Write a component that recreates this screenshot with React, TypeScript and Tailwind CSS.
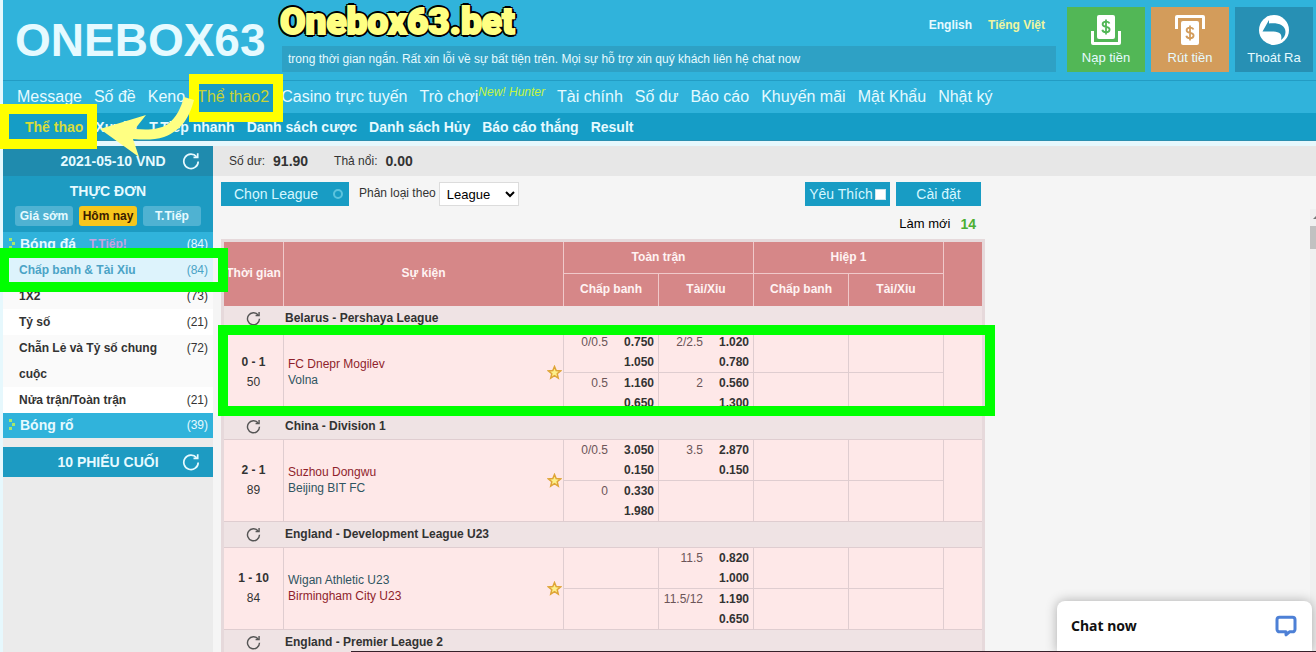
import clsx from "clsx";

type Line = { hdp?: string; odds: [string, string] };

type Match = {
  league: string;
  score: string;
  minute: string;
  home: string;
  away: string;
  favourite: "home" | "away";
  rows: [Line | null, Line | null][];
};

const mainNav = [
  "Message",
  "Số đề",
  "Keno",
  "Thể thao2",
  "Casino trực tuyến",
  "Trò chơi",
  "Tài chính",
  "Số dư",
  "Báo cáo",
  "Khuyến mãi",
  "Mật Khẩu",
  "Nhật ký",
];

const subNav = [
  "Thể thao",
  "Xuyên",
  "T.Tiếp nhanh",
  "Danh sách cược",
  "Danh sách Hủy",
  "Báo cáo thắng",
  "Result",
];

const markets = [
  { name: "Chấp banh & Tài Xỉu", count: 84 },
  { name: "1X2", count: 73 },
  { name: "Tỷ số", count: 21 },
  { name: "Chẵn Lẻ và Tỷ số chung cuộc", count: 72 },
  { name: "Nửa trận/Toàn trận", count: 21 },
];

const matches: Match[] = [
  {
    league: "Belarus - Pershaya League",
    score: "0 - 1",
    minute: "50",
    home: "FC Dnepr Mogilev",
    away: "Volna",
    favourite: "home",
    rows: [
      [
        { hdp: "0/0.5", odds: ["0.750", "1.050"] },
        { hdp: "2/2.5", odds: ["1.020", "0.780"] },
      ],
      [
        { hdp: "0.5", odds: ["1.160", "0.650"] },
        { hdp: "2", odds: ["0.560", "1.300"] },
      ],
    ],
  },
  {
    league: "China - Division 1",
    score: "2 - 1",
    minute: "89",
    home: "Suzhou Dongwu",
    away: "Beijing BIT FC",
    favourite: "home",
    rows: [
      [
        { hdp: "0/0.5", odds: ["3.050", "0.150"] },
        { hdp: "3.5", odds: ["2.870", "0.150"] },
      ],
      [{ hdp: "0", odds: ["0.330", "1.980"] }, null],
    ],
  },
  {
    league: "England - Development League U23",
    score: "1 - 10",
    minute: "84",
    home: "Wigan Athletic U23",
    away: "Birmingham City U23",
    favourite: "away",
    rows: [
      [null, { hdp: "11.5", odds: ["0.820", "1.000"] }],
      [null, { hdp: "11.5/12", odds: ["1.190", "0.650"] }],
    ],
  },
];

const RefreshIcon = ({ className }: { className?: string }) => (
  <svg viewBox="0 0 18 18" fill="none" className={className}>
    <path
      d="M14.600 4.800A7.200 7.200 0 1 0 16.200 9.400"
      stroke="currentColor"
      strokeWidth="1.7"
    />
    <path d="M11.500 5.400h4.200V1.200" stroke="currentColor" strokeWidth="1.7" />
  </svg>
);

const StarIcon = () => (
  <svg viewBox="0 0 16 16" className="size-[15px] shrink-0">
    <path
      d="M8 1.600l1.800 4.300 4.700.4-3.600 3 1.100 4.600L8 11.400l-4 2.500 1.100-4.600-3.600-3 4.700-.4z"
      fill="#fdf08a"
      stroke="#dfa437"
      strokeWidth="1.6"
    />
  </svg>
);

const DepositIcon = () => (
  <svg viewBox="0 0 30 30" className="size-[30px]">
    <rect x="6" y="0" width="18" height="24" rx="2" fill="#fff" />
    <path d="M0 16h3v11h24V16h3v12a2 2 0 0 1-2 2H2a2 2 0 0 1-2-2z" fill="#fff" />
    <path
      d="M18.400 8.500C18 7 16.600 6.600 15 6.600c-2 0-3.400 1-3.400 2.600 0 3.800 7 1.800 7 5.400 0 1.800-1.600 2.700-3.600 2.700-1.900 0-3.300-.8-3.700-2.500M15 4.500v15"
      fill="none"
      stroke="#52b756"
      strokeWidth="1.8"
    />
  </svg>
);

const WithdrawIcon = () => (
  <svg viewBox="0 0 30 30" className="size-[30px]">
    <rect x="6" y="6" width="18" height="24" rx="2" fill="#fff" />
    <path d="M0 14V2a2 2 0 0 1 2-2h26a2 2 0 0 1 2 2v12h-3V3H3v11z" fill="#fff" />
    <path
      d="M18.400 14.500C18 13 16.600 12.600 15 12.600c-2 0-3.400 1-3.400 2.600 0 3.800 7 1.800 7 5.400 0 1.800-1.600 2.700-3.600 2.700-1.900 0-3.300-.8-3.700-2.500M15 10.500v15"
      fill="none"
      stroke="#d39c5b"
      strokeWidth="1.8"
    />
  </svg>
);

const LogoutIcon = () => (
  <svg viewBox="0 0 30 30" className="size-[30px]">
    <circle cx="15" cy="15" r="15" fill="#fff" />
    <path
      d="M3.500 16.500L10 5v3.500C18 7.500 26.500 9.500 26.500 17c0 3.500-2 6.500-4.500 8 1.500-6-1-8.500-10-8.500z"
      fill="#2790b4"
    />
  </svg>
);

const ArrowMarks = () => (
  <svg viewBox="0 0 7 12" className="h-3 w-[7px] shrink-0">
    <path
      d="M0 0h3v3H0zM3 4h3v3H3zM0 8h3v3H0z"
      fill="#a6e86a"
    />
  </svg>
);

const Header = () => (
  <header className="bg-[#30b3db] text-[#e6faff]">
    <div className="flex h-[81px] border-b border-[#239cc4]">
      <h1 className="w-[279px] shrink-0 pt-[14px] pl-3 text-[46px] leading-[52px] font-bold">
        ONEBOX63
      </h1>
      <div className="flex min-w-0 flex-1 flex-col">
        <div className="flex h-[46px] justify-end gap-4 pt-4 pr-[11px] text-xs leading-[18px] font-bold">
          <a href="#en">English</a>
          <a href="#vi" className="text-[#eff5a0]">
            Tiếng Việt
          </a>
        </div>
        <p className="h-[26px] truncate bg-[#2ea1c5] px-[6px] text-xs leading-[26px] text-[#e6faff]">
          trong thời gian ngắn. Rất xin lỗi về sự bất tiện trên. Mọi sự hỗ trợ
          xin quý khách liên hệ chat now
        </p>
      </div>
      <div className="flex gap-[6px] pt-[7px] pr-[3px] pl-[11px] text-[13px] leading-4">
        <button className="flex h-[65px] w-[78px] flex-col items-center gap-[5px] bg-[#52b756] pt-2">
          <DepositIcon />
          Nạp tiền
        </button>
        <button className="flex h-[65px] w-[78px] flex-col items-center gap-[5px] bg-[#d39c5b] pt-2">
          <WithdrawIcon />
          Rút tiền
        </button>
        <button className="flex h-[65px] w-[78px] flex-col items-center gap-[5px] bg-[#2790b4] pt-2">
          <LogoutIcon />
          Thoát Ra
        </button>
      </div>
    </div>
    <nav className="flex h-8 gap-3 pl-[14px] text-base leading-8 whitespace-nowrap">
      {mainNav.map((item) => (
        <a
          key={item}
          href="#nav"
          className={clsx(
            "flex",
            item === "Thể thao2" && "-mx-2 bg-[#1a9ac4] px-2 text-[#c9d335]",
          )}
        >
          {item}
          {item === "Trò chơi" && (
            <em className="text-xs leading-[22px] text-[#c5f542]">
              New! Hunter
            </em>
          )}
        </a>
      ))}
    </nav>
    <nav className="flex h-7 gap-3 border-b border-[#2a8fb0] bg-[#159dc6] pl-[22px] text-sm leading-7 font-bold whitespace-nowrap">
      {subNav.map((item) => (
        <a
          key={item}
          href="#sub"
          className={clsx(item === "Thể thao" && "text-[#d8dc3a]")}
        >
          {item}
        </a>
      ))}
    </nav>
  </header>
);

const Sidebar = () => (
  <aside className="w-[210px] shrink-0 text-xs">
    <div className="relative flex h-[30px] items-center justify-center bg-[#1f8bae] pl-[10px] text-sm font-bold text-[#e6faff]">
      2021-05-10 VND
      <button aria-label="Làm mới" className="absolute right-[13px]">
        <RefreshIcon className="size-[18px]" />
      </button>
    </div>
    <div className="h-14 bg-[#1d9bc2] text-center font-bold text-[#e6faff]">
      <h2 className="text-sm leading-[30px]">THỰC ĐƠN</h2>
      <div className="flex justify-center gap-[6px]">
        <button className="h-5 w-[58px] rounded-[3px] bg-[#4fb2d2]">
          Giá sớm
        </button>
        <button className="h-5 w-[58px] rounded-[3px] bg-[#f6c61c] text-[#3b1c00]">
          Hôm nay
        </button>
        <button className="h-5 w-[58px] rounded-[3px] bg-[#4fb2d2]">
          T.Tiếp
        </button>
      </div>
    </div>
    <div className="flex h-[25px] items-center bg-[#30b3db] pr-[5px] pb-[2px] pl-[6px] text-[#e6faff]">
      <ArrowMarks />
      <h3 className="ml-1 text-sm font-bold">Bóng đá</h3>
      <span className="ml-[13px] font-bold text-[#c6a3df]">T.Tiếp!</span>
      <span className="ml-auto">(84)</span>
    </div>
    <ul className="text-[#333]">
      {markets.map((m, i) => (
        <li key={m.name}>
          <a
            href="#market"
            className={clsx(
              "flex justify-between pr-[5px] pl-4 leading-[26px]",
              i === 0 && "bg-[#ddf3fc] text-[#4ba3c6]",
              i === 2 || i === 4 ? "bg-white" : i !== 0 && "bg-[#fafafa]",
            )}
          >
            <span className="w-[150px] font-bold">{m.name}</span>
            <span>({m.count})</span>
          </a>
        </li>
      ))}
    </ul>
    <div className="flex h-[25px] items-center bg-[#30b3db] pr-[5px] pb-[2px] pl-[6px] text-[#e6faff]">
      <ArrowMarks />
      <h3 className="ml-1 text-sm font-bold">Bóng rổ</h3>
      <span className="ml-auto">(39)</span>
    </div>
    <div className="relative mt-[9px] flex h-[30px] items-center justify-center bg-[#1d9bc2] text-sm font-bold text-[#e6faff]">
      10 PHIẾU CUỐI
      <button aria-label="Làm mới phiếu" className="absolute right-[13px]">
        <RefreshIcon className="size-[18px]" />
      </button>
    </div>
  </aside>
);

const OddsCell = ({ line }: { line: Line | null }) => (
  <td className="border-r border-b border-[#dfcdd0] pr-1 align-top">
    {line && (
      <div className="flex justify-between leading-5">
        <span className="w-11 text-right text-[#6b5558]">{line.hdp}</span>
        <span className="text-right font-bold">
          {line.odds[0]}
          <br />
          {line.odds[1]}
        </span>
      </div>
    )}
  </td>
);

const LeagueRow = ({ name }: { name: string }) => (
  <tr className="h-[26px] bg-[#efe3e4]">
    <td className="border-b border-[#dfcdd0]">
      <button aria-label={`Làm mới ${name}`} className="block px-[22px]">
        <RefreshIcon className="size-[15px] text-[#555]" />
      </button>
    </td>
    <td
      colSpan={6}
      className="border-b border-[#dfcdd0] pb-[2px] pl-[1px] font-bold"
    >
      {name}
    </td>
  </tr>
);

const MatchRows = ({ match }: { match: Match }) => (
  <>
    <LeagueRow name={match.league} />
    {match.rows.map(([handicap, total], i) => (
      <tr key={i} className="h-[41px] bg-[#fee8e8]">
        {i === 0 && (
          <>
            <td
              rowSpan={2}
              className="border-r border-b border-[#dfcdd0] pb-[2px] text-center leading-5"
            >
              <b>{match.score}</b>
              <br />
              {match.minute}
            </td>
            <td rowSpan={2} className="border-r border-b border-[#dfcdd0]">
              <div className="flex items-center justify-between pr-[1px] pl-1 leading-4">
                <div className="pb-[2px]">
                  <p
                    className={clsx(
                      match.favourite === "home"
                        ? "text-[#8f1f2c]"
                        : "text-[#2f5561]",
                    )}
                  >
                    {match.home}
                  </p>
                  <p
                    className={clsx(
                      match.favourite === "away"
                        ? "text-[#8f1f2c]"
                        : "text-[#2f5561]",
                    )}
                  >
                    {match.away}
                  </p>
                </div>
                <StarIcon />
              </div>
            </td>
          </>
        )}
        <OddsCell line={handicap} />
        <OddsCell line={total} />
        <OddsCell line={null} />
        <OddsCell line={null} />
        {i === 0 && (
          <td rowSpan={2} className="border-b border-[#dfcdd0]"></td>
        )}
      </tr>
    ))}
  </>
);

const OddsTable = () => (
  <table className="w-full table-fixed border-separate border-spacing-0 border-[3px] border-[#e6d9db] text-xs text-[#333]">
    <colgroup>
      <col className="w-[60px]" />
      <col className="w-[280px]" />
      <col className="w-[95px]" />
      <col className="w-[95px]" />
      <col className="w-[95px]" />
      <col className="w-[95px]" />
      <col />
    </colgroup>
    <thead className="bg-[#d68788] text-[#fff3f3]">
      <tr className="h-8">
        <th
          rowSpan={2}
          className="border-r border-[#f0c9ca] pb-[2px] whitespace-nowrap"
        >
          Thời gian
        </th>
        <th rowSpan={2} className="border-r border-[#f0c9ca] pb-[2px]">
          Sự kiện
        </th>
        <th colSpan={2} className="border-r border-b border-[#f0c9ca] pb-[2px]">
          Toàn trận
        </th>
        <th colSpan={2} className="border-r border-b border-[#f0c9ca] pb-[2px]">
          Hiệp 1
        </th>
        <th rowSpan={2}></th>
      </tr>
      <tr className="h-8">
        <th className="border-r border-[#f0c9ca] pb-[2px]">Chấp banh</th>
        <th className="border-r border-[#f0c9ca] pb-[2px]">Tài/Xỉu</th>
        <th className="border-r border-[#f0c9ca] pb-[2px]">Chấp banh</th>
        <th className="border-r border-[#f0c9ca] pb-[2px]">Tài/Xỉu</th>
      </tr>
    </thead>
    <tbody>
      {matches.map((m) => (
        <MatchRows key={m.league} match={m} />
      ))}
      <LeagueRow name="England - Premier League 2" />
    </tbody>
  </table>
);

const Main = () => (
  <main className="flex min-w-0 flex-1 flex-col bg-[#f5f5f5] text-xs text-[#333]">
    <div className="flex h-[30px] shrink-0 items-center bg-[#e7e7e7] pl-4">
      <span>Số dư:</span>
      <b className="ml-2 text-sm">91.90</b>
      <span className="ml-[26px]">Thả nổi:</span>
      <b className="ml-2 text-sm">0.00</b>
    </div>
    <div className="flex min-h-0 flex-1">
      <div className="w-[772px] shrink-0 pt-[6px] pl-2">
        <div className="flex h-6 items-center pr-1">
          <button className="flex h-6 w-32 items-center justify-between bg-[#189cc4] pr-[6px] pl-[13px] text-sm text-[#d5f7ff]">
            Chọn League
            <span className="size-[10px] rounded-full border-2 border-[#5cc3dd]"></span>
          </button>
          <label htmlFor="sort" className="ml-[10px] pb-[2px]">
            Phân loại theo
          </label>
          <select
            id="sort"
            className="ml-[3px] h-6 w-20 border border-[#dcdcdc] bg-white pl-[3px] text-[13px] text-black"
          >
            <option>League</option>
            <option>Thời gian</option>
          </select>
          <label className="ml-auto flex h-6 w-[85px] items-center justify-center gap-[2px] bg-[#189cc4] text-sm whitespace-nowrap text-[#d5f7ff]">
            Yêu Thích
            <input
              type="checkbox"
              className="size-[11px] appearance-none border border-[#cfe6ee] bg-white"
            />
          </label>
          <button className="ml-[6px] h-6 w-[85px] bg-[#189cc4] text-sm text-[#d5f7ff]">
            Cài đặt
          </button>
        </div>
        <div className="mt-2 mb-[5px] flex h-5 items-center justify-end gap-[10px] pr-[9px] text-black">
          <span className="text-[13px]">Làm mới</span>
          <b className="text-sm text-[#4caf32]">14</b>
        </div>
        <OddsTable />
      </div>
      <div className="mt-[33px] ml-auto w-[6px] shrink-0 bg-[#f0f0f0]">
        <svg viewBox="0 0 6 17" className="h-[17px] w-[6px]">
          <path d="M3 10l4-4v4z" fill="#777" />
        </svg>
        <div className="h-[23px] bg-[#c1c1c1]"></div>
      </div>
    </div>
  </main>
);

const ChatWidget = () => (
  <button className="absolute right-1 bottom-0 flex h-[51px] w-[255px] items-center justify-between rounded-t-lg bg-white pr-[15px] pb-[2px] pl-[14px] font-['Noto_Sans',sans-serif] text-sm font-bold text-[#111] shadow-[0_0_12px_rgba(0,0,0,0.3)]">
    Chat now
    <svg viewBox="0 0 22 22" className="size-[22px]">
      <path
        d="M4.500 2.200h13a2.500 2.500 0 0 1 2.500 2.500v9.600a2.500 2.500 0 0 1-2.500 2.500h-3l-3.500 3v-3H4.500A2.500 2.500 0 0 1 2 14.300V4.700a2.500 2.500 0 0 1 2.500-2.500z"
        fill="none"
        stroke="#4d80d6"
        strokeWidth="3"
        strokeLinejoin="round"
      />
    </svg>
  </button>
);

// Highlight boxes and arrow drawn on top of the page
const Annotations = () => (
  <div className="pointer-events-none">
    <div className="absolute top-[74px] left-[189px] h-12 w-[94px] border-10 border-[#ffff00]"></div>
    <div className="absolute top-[104px] -left-px h-[45px] w-[98px] border-10 border-[#ffff00]"></div>
    <div className="absolute top-[248px] -left-px h-11 w-[229px] border-10 border-[#00ff00]"></div>
    <div className="absolute top-[325px] left-[218px] h-[91px] w-[777px] border-10 border-[#00ff00]"></div>
    <svg viewBox="0 0 100 64" className="absolute top-24 left-[98px] h-16 w-[100px]">
      <path
        d="M86 1l10 3C91 22 84 34 66 41c-9 3-20 3-31 2l6 18L2 33l46-14-11 14c12 1 24 1 33-5C78 22 83 12 86 1z"
        fill="#ffff82"
      />
    </svg>
    <p className="absolute top-0 left-[280px] font-['Roboto',sans-serif] text-[37px] leading-[44px] font-black text-[#ffff82] [-webkit-text-stroke:2px_#ffff82] [text-shadow:3px_0_#000,-3px_0_#000,0_3px_#000,0_-3px_#000,2px_2px_#000,-2px_2px_#000,2px_-2px_#000,-2px_-2px_#000]">
      Onebox63.bet
    </p>
  </div>
);

export default function App() {
  return (
    <div className="relative flex h-screen flex-col overflow-hidden bg-[#e6f8fd] pl-[3px] font-['Liberation_Sans',Arial,sans-serif]">
      <Header />
      <div className="mt-[5px] flex min-h-0 flex-1 bg-[#ebebeb]">
        <Sidebar />
        <Main />
      </div>
      <ChatWidget />
      <Annotations />
      <div className="absolute right-0 bottom-0 left-[351px] h-px bg-[#35202a]"></div>
    </div>
  );
}
